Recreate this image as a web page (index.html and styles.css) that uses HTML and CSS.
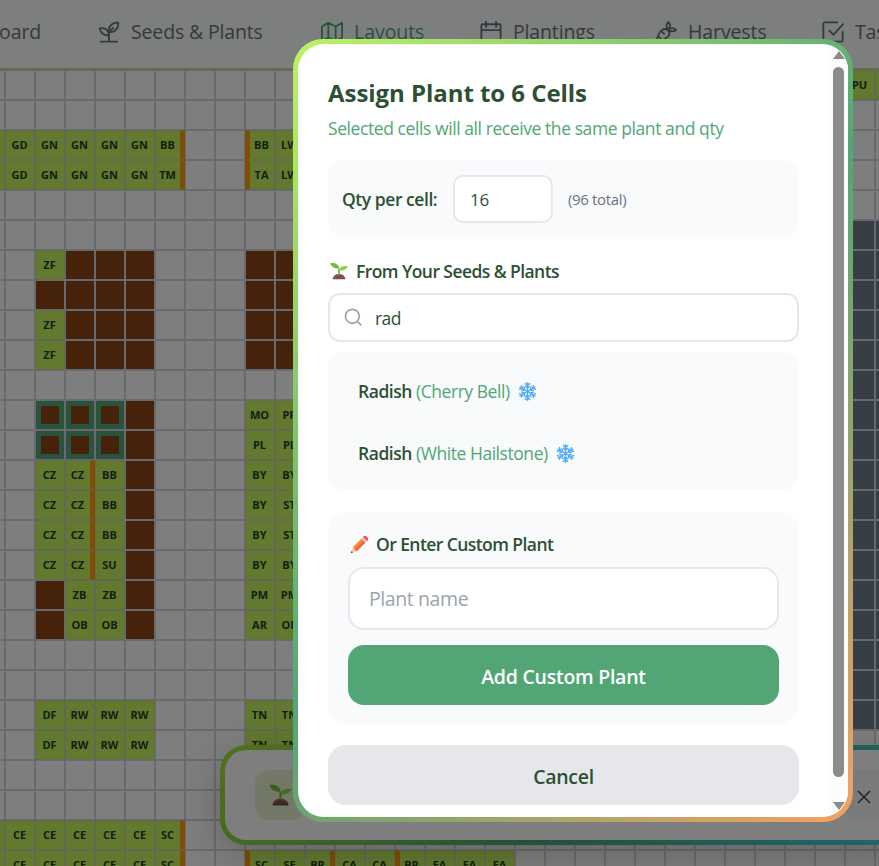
FILE: index.html
```html
<!DOCTYPE html>
<html lang="en">
<head>
<meta charset="utf-8">
<title>Garden Layouts</title>
<link rel="stylesheet" href="styles.css">
</head>
<body>
<svg class="defs" width="0" height="0">
  <symbol id="seedling" viewBox="0 0 24 24">
    <path d="M3.500 23c.5-4.600 4-7 8.500-7s8 2.400 8.500 7z" fill="#7d4d49"/>
    <path d="M6 20.500c1-2.600 3-3.400 6-3.400s4.500.8 5.500 2.600" fill="none" stroke="#9c6a63" stroke-width="1.200"/>
    <path d="M12 17V9" stroke="#6bb83a" stroke-width="2.200" fill="none"/>
    <path d="M12.300 8.500C11.500 3 7 .8.500 1.500 1.500 6 6 9 12.300 8.500z" fill="#72bd38"/>
    <path d="M12 11c.5-4 5-6 11.500-5.500-.5 4-5.500 6.500-11.500 5.500z" fill="#86d545"/>
  </symbol>
  <symbol id="snow" viewBox="0 0 24 24">
    <g stroke="#4fa9f5" stroke-width="1.700" stroke-linecap="round" fill="none">
      <g id="arm"><path d="M12 12V1M9.300 1.800L12 4.500l2.700-2.700M9.300 5.300L12 8l2.700-2.700"/></g>
      <use href="#arm" transform="rotate(60 12 12)"/><use href="#arm" transform="rotate(120 12 12)"/>
      <use href="#arm" transform="rotate(180 12 12)"/><use href="#arm" transform="rotate(240 12 12)"/>
      <use href="#arm" transform="rotate(300 12 12)"/>
    </g>
  </symbol>
</svg>

<header class="nav">
  <a class="nav-item first"><span class="t-board">Dashboard</span></a>
  <a class="nav-item seeds"><svg viewBox="0 0 24 24"><path d="M3 22.500h18M12 22.500V12.500M12 15.500C7 16 2.500 13.500 2 8c5-1 9.500 1.500 10 7.500zM12 12.500C11 6 15 1.500 22 1.500c1 6-3 10.500-10 11zM12 12.500l4.500-5"/></svg><span class="t-seeds">Seeds &amp; Plants</span></a>
  <a class="nav-item layouts"><svg viewBox="0 0 24 24"><path d="M1 6v16l7-4 8 4 7-4V2l-7 4-8-4-7 4zM8 2v16M16 6v16"/></svg><span class="t-layouts">Layouts</span></a>
  <a class="nav-item plantings"><svg viewBox="0 0 24 24"><path d="M3 3.500h18a1.500 1.500 0 0 1 1.500 1.500v16a1.500 1.500 0 0 1-1.500 1.500H3A1.500 1.500 0 0 1 1.500 21V5A1.500 1.500 0 0 1 3 3.500zM6.500.500v6M17.500.500v6M1.500 10h21"/></svg><span class="t-plantings">Plantings</span></a>
  <a class="nav-item harvests"><svg viewBox="0 0 24 24"><path d="M1.500 22.500c1-5.500 3-10 6-12.500 2.500-2 5.500-1.500 7 .5s1.500 4.500-.5 6.500c-3 3-7 4.500-12.500 5.500zM7.500 11.500l2.500 2.500M6 19l-2-2M14.500 9.500c-2.500-3-2.500-6 0-8.500 2.500 2.500 2.500 5.500 0 8.500zM14.500 9.500c3-2.500 5.500-2.500 8.500 0-3 2.500-5.500 2.500-8.500 0z"/></svg><span class="t-harvests">Harvests</span></a>
  <a class="nav-item tasks"><svg viewBox="0 0 24 24"><path d="M16.500 1.500H3A1.500 1.500 0 0 0 1.500 3v18A1.500 1.500 0 0 0 3 22.500h18a1.500 1.500 0 0 0 1.500-1.500v-9M8 10.500l4.500 4.500L23 3.500"/></svg><span class="t-tasks">Tasks</span></a>
</header>

<main class="board"><div class="grid" id="grid"></div></main>

<aside class="toast"><div class="toast-body">
  <span class="toast-icon"><svg><use href="#seedling"/></svg></span>
  <span class="toast-close"><svg viewBox="0 0 14 14"><path d="M1 1l12 12M13 1L1 13"/></svg></span>
</div></aside>

<div class="overlay"></div>

<section class="modal"><div class="modal-inner">
  <div class="content">
    <h2><span>Assign Plant to 6 Cells</span></h2>
    <p class="sub"><span>Selected cells will all receive the same plant and qty</span></p>
    <div class="qty">
      <label>Qty per cell:</label>
      <div class="qty-input">16</div>
      <span class="total">(96 total)</span>
    </div>
    <h3 class="from"><svg><use href="#seedling"/></svg><span>From Your Seeds &amp; Plants</span></h3>
    <div class="search">
      <svg viewBox="0 0 20 20"><circle cx="8.800" cy="8.800" r="7.300"/><path d="M14.200 14.200l4 4"/></svg>
      <span>rad</span>
    </div>
    <div class="results">
      <div class="result"><b>Radish</b><span class="r1">(Cherry Bell)</span><svg><use href="#snow"/></svg></div>
      <div class="result"><b>Radish</b><span class="r2">(White Hailstone)</span><svg><use href="#snow"/></svg></div>
    </div>
    <div class="custom">
      <h3><svg viewBox="0 0 24 24">
        <path d="M1 23l2.500-7.500 5 5z" fill="#f5c9a0"/><path d="M1 23l.9-2.800 1.900 1.900z" fill="#4a3a55"/>
        <path d="M3.500 15.500L14.500 4.500l5 5-11 11z" fill="#f98b3c"/><path d="M5.800 18L17 7l2.500 2.500-11 11z" fill="#ee6a3a"/>
        <path d="M14.500 4.500l2-2 5 5-2 2z" fill="#e3c4d2"/><path d="M16.500 2.500l1.200-1.200q1.300-1 2.600.2l2.200 2.200q1.200 1.300.2 2.600l-1.200 1.200z" fill="#f4485e"/>
      </svg><span>Or Enter Custom Plant</span></h3>
      <div class="name-input"><span>Plant name</span></div>
      <button class="add"><span>Add Custom Plant</span></button>
    </div>
    <button class="cancel"><span>Cancel</span></button>
  </div>
  <div class="scroll"><i class="up"></i><i class="thumb"></i><i class="down"></i></div>
</div></section>
<script src="script.js"></script>
</body>
</html>
```
FILE: styles.css
```css
* { box-sizing: border-box; }
html, body { margin: 0; height: 866px; overflow: hidden; }
body { font-family: "Open Sans", "Noto Sans", sans-serif; background: #fcfcfc; color: #2d5034; position: relative; }
.defs { position: absolute; }
span, b, label { white-space: nowrap; }

.nav { height: 70px; display: flex; align-items: center; padding-bottom: 5px; background: #fbfdfc; border-bottom: 2px solid #c6db9b; overflow: hidden; }
.nav-item { display: flex; align-items: center; flex: none; gap: 11px; font-size: 19.500px; font-weight: 500; color: #6b7280; letter-spacing: -.15px; }
.nav-item svg { width: 22px; height: 22px; flex: none; fill: none; stroke: currentColor; stroke-width: 2; stroke-linecap: round; stroke-linejoin: round; }
.first { width: 41px; justify-content: flex-end; margin-right: 57px; }
.seeds { width: 223px; }
.layouts { width: 159px; color: #4fa675; letter-spacing: -.05px; }
.plantings { width: 175px; }
.harvests { width: 167px; letter-spacing: -.1px; }

.board { height: 796px; overflow: hidden; }
.grid { display: grid; grid-template-columns: repeat(31, 30px); grid-auto-rows: 30px; margin-left: -25px; width: 930px; }
.cell { border: 1px solid #d1d5db; display: flex; align-items: center; justify-content: center; font-size: 11px; font-weight: 700; color: #1e421e; padding: 0 1px 2px 0; }
.plant { background: #c4f25e; border-color: #c5d6a0; }
.soil { background: #8b4513; }
.sel { box-shadow: inset 0 0 0 5px #52a67a; }
.slate { background: #707d8b; }
.bar-r { border-right: 5px solid #ff9a08; }
.bar-l { border-left: 5px solid #ff9a08; }

.toast { position: absolute; left: 220px; top: 745px; width: 700px; height: 100px; padding: 5px; border-radius: 26px; background: linear-gradient(135deg, #a3e635, #4a9f70 50%, #3dd0e0); box-shadow: 0 10px 40px rgba(0,0,0,.2); }
.toast-body { height: 100%; border-radius: 21px; background: #fcfcfc; display: flex; align-items: center; padding-left: 30px; }
.toast-icon { width: 50px; height: 50px; border-radius: 14px; background: #e6f2cc; display: flex; align-items: center; justify-content: center; }
.toast-icon svg { width: 23px; height: 24px; }
.toast-close { margin-left: 538px; width: 50px; height: 50px; background: #f3f4f6; display: flex; align-items: center; padding: 3px 0 0 14px; border-radius: 14px; }
.toast-close svg { width: 14px; height: 14px; fill: none; stroke: #444; stroke-width: 1.500; }
.overlay { position: absolute; inset: 0; background: rgba(0,0,0,.5); }

.modal { position: absolute; left: 293px; top: 39px; width: 560px; height: 783px; padding: 5px; border-radius: 30px; background: linear-gradient(135deg, #bef264, #52a675 50%, #f4a261); }
.modal-inner { height: 100%; border-radius: 26px; background: #fff; overflow: hidden; display: flex; justify-content: space-between; }
.content { width: 501px; padding: 32px 0 0 30px; }
h2, h3, p { margin: 0; font-weight: 600; }
h2 { height: 34px; line-height: 34px; font-size: 24px; font-weight: 700; letter-spacing: -.05px; }
.sub { height: 34px; line-height: 34px; color: #52a675; font-size: 17.500px; font-weight: 400; letter-spacing: -.42px; margin-top: 1px; }
.qty { margin-top: 15px; height: 77px; background: #f8fafc; border-radius: 16px; display: flex; align-items: center; padding-left: 15px; }
.qty label { width: 110px; font-size: 17.500px; font-weight: 600; letter-spacing: -.45px; padding-top: 1px; margin-left: -1px; margin-right: 1px; }
.qty-input { width: 100px; height: 48px; border: 2px solid #e5e7eb; border-radius: 10px; background: #fff; line-height: 46px; padding-left: 15px; font-size: 17px; letter-spacing: -.3px; }
.total { margin-left: 15px; font-size: 15px; color: #6b7280; letter-spacing: -.35px; padding-top: 1px; }
h3 { display: flex; align-items: center; height: 30px; font-size: 17.500px; letter-spacing: -.57px; }
h3 svg { width: 18px; height: 18px; margin: 0 8px 0 2px; }
.from { margin-top: 19px; }
.search { margin-top: 7px; height: 49px; border: 2px solid #e5e7eb; border-radius: 12px; display: flex; align-items: center; padding-left: 14px; gap: 12px; font-size: 17.500px; letter-spacing: -.6px; }
.search span { padding-top: 1px; }
.search svg { width: 19px; height: 19px; fill: none; stroke: #9ca3af; stroke-width: 1.800; }
.results { margin-top: 10px; height: 138px; border-radius: 16px; background: #f8fafc; padding: 8px 0 0 30px; }
.result { height: 62px; display: flex; align-items: center; font-size: 17.500px; letter-spacing: -.45px; }
.result b { width: 58px; font-weight: 600; }
.result span { color: #52a675; }
.result svg { width: 19px; height: 19px; margin-left: 8px; }
.custom { margin-top: 22px; height: 212px; border-radius: 20px; background: #f8fafc; padding: 17px 20px; }
.custom h3 svg { margin: 0 7px 0 2px; width: 19px; height: 19px; }
.name-input { margin-top: 8px; height: 63px; border: 2px solid #e5e7eb; border-radius: 16px; background: #fff; display: flex; align-items: center; padding-left: 19px; font-size: 19.500px; letter-spacing: -.4px; color: #9ca3af; }
button { display: block; border: 0; width: 100%; height: 60px; font: 600 19.500px "Open Sans", sans-serif; padding: 2px 0 0; }
.add { margin-top: 15px; background: #52a675; color: #fff; border-radius: 16px; letter-spacing: -.25px; }
.cancel { margin-top: 21px; background: #e5e7eb; color: #2d5034; border-radius: 18px; letter-spacing: -.3px; }
.scroll { width: 19px; background: #fcfcfd; display: flex; flex-direction: column; align-items: center; padding: 7px 0 0; }
.up { border: 6px solid transparent; border-top: 0; border-bottom: 8px solid #8b8b8b; }
.thumb { width: 11px; height: 710px; flex: none; margin: 8px 0 25px; border-radius: 6px; background: #8b8b8b; }
.down { border: 6px solid transparent; border-bottom: 0; border-top: 8px solid #8b8b8b; }
```
FILE: script.js
```js
// Board rows: { row: { column: code } }. "#" is soil, "@" selected soil, "=" slate,
// a trailing ">" or "<" adds a border bar on that side.
const rows = {};
function put(row, col, text) {
  rows[row] = rows[row] || {};
  text.split(' ').forEach((code, i) => { rows[row][col + i] = code; });
}
put(0, 28, 'PU PU PU');
put(2, 0, 'GD GD GN GN GN GN BB>'); put(3, 0, 'GD GD GN GN GN GN TM>');
put(2, 9, 'BB< LW'); put(3, 9, 'TA< LW');
put(6, 2, 'ZF # # #'); put(7, 2, '# # # #'); put(8, 2, 'ZF # # #'); put(9, 2, 'ZF # # #');
[6, 7, 8, 9].forEach(r => put(r, 9, '# #'));
put(11, 2, '@ @ @ #'); put(12, 2, '@ @ @ #');
[13, 14, 15].forEach(r => put(r, 2, 'CZ CZ> BB #'));
put(16, 2, 'CZ CZ> SU #'); put(17, 2, '# ZB ZB #'); put(18, 2, '# OB OB #');
['MO PR', 'PL PL', 'BY BY', 'BY ST', 'BY ST', 'BY BY', 'PM PM', 'AR OR'].forEach((t, i) => put(11 + i, 9, t));
[21, 22].forEach(r => { put(r, 2, 'DF RW RW RW'); put(r, 9, 'TN TN'); });
[25, 26].forEach(r => put(r, 0, 'CE CE CE CE CE CE SC>'));
put(26, 9, 'SC< SE BR> CA CA BR< EA EA EA');
for (let r = 5; r < 22; r++) put(r, 28, '= = =');

const grid = document.getElementById('grid');
for (let r = 0; r < 27; r++) for (let c = 0; c < 31; c++) {
  const cell = document.createElement('div');
  const code = (rows[r] || {})[c] || '';
  let cls = 'cell';
  if (code === '#') cls += ' soil';
  else if (code === '@') cls += ' soil sel';
  else if (code === '=') cls += ' slate';
  else if (code) {
    cls += ' plant';
    if (code.endsWith('>')) cls += ' bar-r';
    if (code.endsWith('<')) cls += ' bar-l';
    cell.textContent = code.slice(0, 2);
  }
  cell.className = cls;
  grid.appendChild(cell);
}
```
